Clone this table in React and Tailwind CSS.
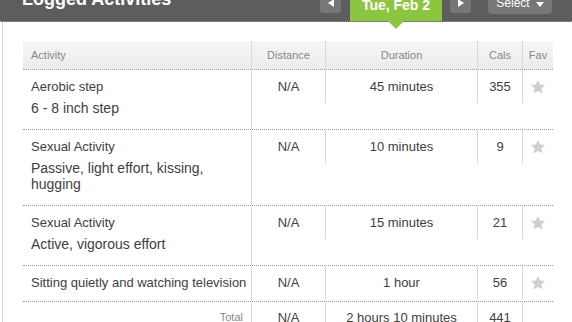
import React from "react";

const rows = [
  { name: "Aerobic step", desc: "6 - 8 inch step", dist: "N/A", dur: "45 minutes", cals: "355" },
  { name: "Sexual Activity", desc: "Passive, light effort, kissing, hugging", dist: "N/A", dur: "10 minutes", cals: "9" },
  { name: "Sexual Activity", desc: "Active, vigorous effort", dist: "N/A", dur: "15 minutes", cals: "21" },
  { name: "Sitting quietly and watching television", desc: null, dist: "N/A", dur: "1 hour", cals: "56" },
];

function Star() {
  return (
    <svg width="16" height="16" viewBox="0 0 24 24" className="block">
      <path
        d="M12 1.5l3.2 6.7 7.3.9-5.4 5.1 1.4 7.3L12 17.9l-6.5 3.6 1.4-7.3-5.4-5.1 7.3-.9z"
        fill="#d0d0d0"
      />
    </svg>
  );
}

export default function App() {
  return (
    <div className="h-screen w-full overflow-hidden bg-white font-['Liberation_Sans',Arial,sans-serif] text-[13px] text-[#404040]">
      {/* Top bar */}
      <div className="flex h-[22px] items-start border-b border-dotted border-[#9a9a9a] bg-[#5d5d5d]">
        <div className="mt-[-10px] pl-[22px] text-[18px] font-bold leading-[18px] text-white">
          Logged Activities
        </div>
        <div className="ml-auto flex items-start pr-[20px]">
          <div className="flex h-[13px] w-[21px] items-start justify-center rounded-b-[3px] bg-[#777777]">
            <svg width="6" height="8" viewBox="0 0 6 8" className="mt-[-1px] block">
              <path d="M6 0L0 4l6 4z" fill="#ffffff" />
            </svg>
          </div>
          <div className="relative ml-[9px] flex h-[21px] w-[92px] justify-center bg-[#8cc540]">
            <span className="mt-[-2px] text-[14px] font-bold leading-[14px] text-white">Tue, Feb 2</span>
            <div className="absolute left-1/2 top-full h-0 w-0 -translate-x-1/2 border-x-[8px] border-t-[8px] border-x-transparent border-t-[#8cc540]" />
          </div>
          <div className="ml-[8px] flex h-[13px] w-[21px] items-start justify-center rounded-b-[3px] bg-[#777777]">
            <svg width="6" height="8" viewBox="0 0 6 8" className="mt-[-1px] block">
              <path d="M0 0l6 4-6 4z" fill="#ffffff" />
            </svg>
          </div>
          <div className="ml-[17px] flex h-[14px] w-[64px] items-start justify-center gap-[6px] rounded-b-[4px] bg-[#777777]">
            <span className="mt-[-3px] text-[12px] leading-[12px] text-white">Select</span>
            <svg width="8" height="5" viewBox="0 0 8 5" className="mt-[2px] block">
              <path d="M0 0h8L4 5z" fill="#ffffff" />
            </svg>
          </div>
        </div>
      </div>

      {/* Body */}
      <div className="ml-[2px] h-full border-l border-[#d6d6d6] pl-[20px] pt-[19px]">
        <div className="w-[530px]">
          {/* Header row */}
          <div className="flex h-[29px] border-b border-dotted border-[#9a9a9a] bg-gradient-to-b from-[#f6f6f6] to-[#ececec] text-[11px] leading-[28px] text-[#888888]">
            <div className="w-[229px] shrink-0 border-r border-[#d8d8d8] pl-[8px]">Activity</div>
            <div className="w-[73px] shrink-0 text-center">Distance</div>
            <div className="w-[152px] shrink-0 border-l border-[#d8d8d8] text-center">Duration</div>
            <div className="w-[45px] shrink-0 border-l border-[#d8d8d8] text-center">Cals</div>
            <div className="w-[31px] shrink-0 border-l border-[#d8d8d8] text-center">Fav</div>
          </div>

          {rows.map((r, i) => (
            <div key={i} className="flex items-start border-b border-dotted border-[#9a9a9a]">
              <div className="w-[229px] shrink-0 self-stretch border-r border-[#d8d8d8] pb-[10px] pl-[8px] pt-[8px]">
                <div className="leading-[17px]">{r.name}</div>
                {r.desc && <div className="mb-[3px] mt-[5px] text-[14px] leading-[16px]">{r.desc}</div>}
              </div>
              <div className="w-[73px] shrink-0 pt-[8px] text-center leading-[17px]">{r.dist}</div>
              <div className="h-[33px] w-[152px] shrink-0 border-l border-[#d8d8d8] pt-[8px] text-center leading-[17px]">
                {r.dur}
              </div>
              <div className="h-[33px] w-[45px] shrink-0 border-l border-[#d8d8d8] pt-[8px] text-center leading-[17px]">
                {r.cals}
              </div>
              <div className="flex h-[33px] w-[31px] shrink-0 justify-center border-l border-[#d8d8d8] pt-[9px]">
                <Star />
              </div>
            </div>
          ))}

          {/* Total row */}
          <div className="flex items-start">
            <div className="w-[229px] shrink-0 border-r border-[#d8d8d8] pr-[8px] pt-[7px] text-right text-[11px] leading-[17px] text-[#888888]">
              Total
            </div>
            <div className="w-[73px] shrink-0 pt-[7px] text-center leading-[17px]">N/A</div>
            <div className="h-[33px] w-[152px] shrink-0 border-l border-[#d8d8d8] pt-[7px] text-center leading-[17px]">
              2 hours 10 minutes
            </div>
            <div className="h-[33px] w-[45px] shrink-0 border-l border-[#d8d8d8] pt-[7px] text-center leading-[17px]">
              441
            </div>
            <div className="h-[33px] w-[31px] shrink-0 border-l border-[#d8d8d8]" />
          </div>
        </div>
      </div>
    </div>
  );
}
